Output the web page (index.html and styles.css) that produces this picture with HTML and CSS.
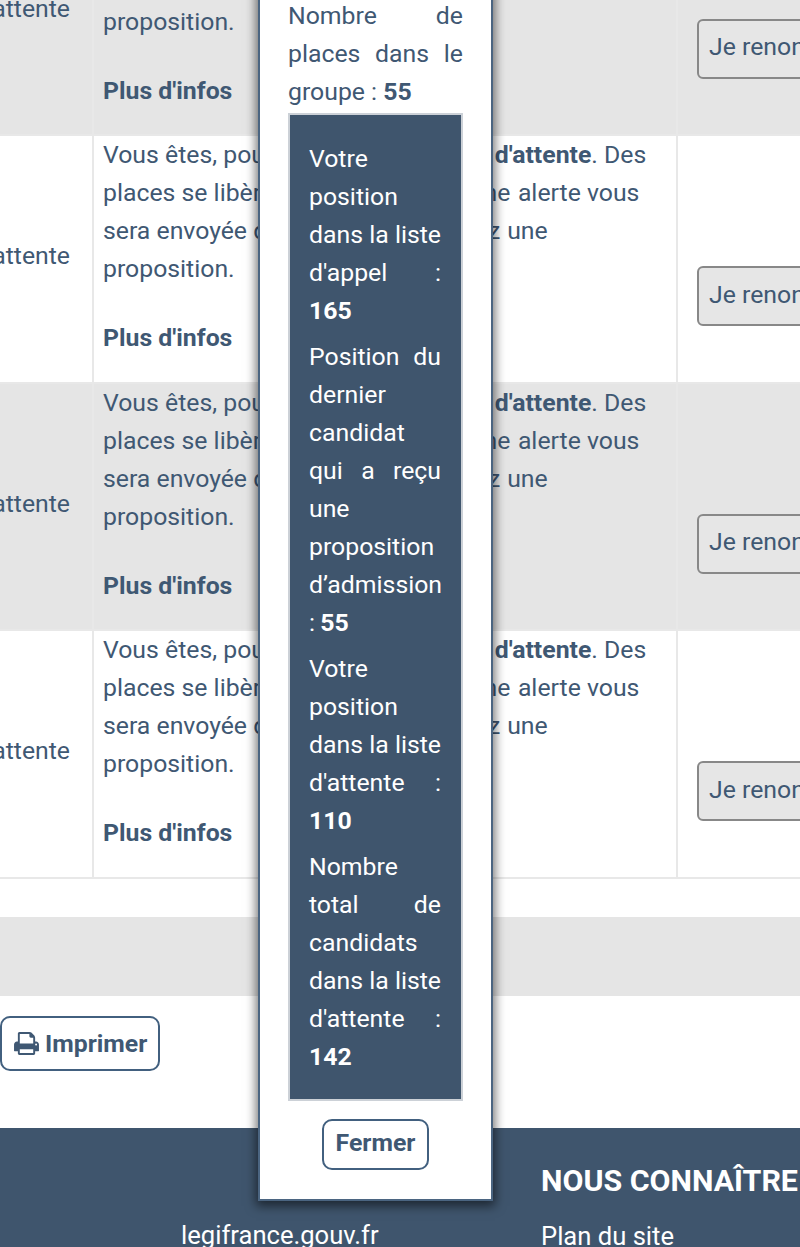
FILE: index.html
```html
<!DOCTYPE html>
<html lang="fr">
<head>
<meta charset="utf-8">
<title>Liste d'attente</title>
<link rel="stylesheet" href="styles.css">
</head>
<body>
<div class="page">
  <main class="scrolled">
    <table class="voeux">
      <tbody>
        <tr class="alt">
          <td class="etat"><span>En attente</span></td>
          <td class="desc"><p>Vous êtes, pour <span class="fit-a">ce vœu, sur la liste </span><b>d'attente</b>. Des<br>places se libèrent <span class="fit-b">au fil de l'eau : une </span>alerte vous<br>sera envoyée <span class="fit-c">dès que vous recevrez </span>une<br>proposition.</p><p class="infos">Plus d'infos</p></td>
          <td class="action"><button class="renoncer">Je renoncer</button></td>
        </tr>
        <tr>
          <td class="etat"><span>En attente</span></td>
          <td class="desc"><p>Vous êtes, pour <span class="fit-a">ce vœu, sur la liste </span><b>d'attente</b>. Des<br>places se libèrent <span class="fit-b">au fil de l'eau : une </span>alerte vous<br>sera envoyée <span class="fit-c">dès que vous recevrez </span>une<br>proposition.</p><p class="infos">Plus d'infos</p></td>
          <td class="action"><button class="renoncer">Je renoncer</button></td>
        </tr>
        <tr class="alt">
          <td class="etat"><span>En attente</span></td>
          <td class="desc"><p>Vous êtes, pour <span class="fit-a">ce vœu, sur la liste </span><b>d'attente</b>. Des<br>places se libèrent <span class="fit-b">au fil de l'eau : une </span>alerte vous<br>sera envoyée <span class="fit-c">dès que vous recevrez </span>une<br>proposition.</p><p class="infos">Plus d'infos</p></td>
          <td class="action"><button class="renoncer">Je renoncer</button></td>
        </tr>
        <tr>
          <td class="etat"><span>En attente</span></td>
          <td class="desc"><p>Vous êtes, pour <span class="fit-a">ce vœu, sur la liste </span><b>d'attente</b>. Des<br>places se libèrent <span class="fit-b">au fil de l'eau : une </span>alerte vous<br>sera envoyée <span class="fit-c">dès que vous recevrez </span>une<br>proposition.</p><p class="infos">Plus d'infos</p></td>
          <td class="action"><button class="renoncer">Je renoncer</button></td>
        </tr>
      </tbody>
    </table>
    <div class="band"></div>
    <div class="print-row">
      <button class="imprimer">
        <svg class="print-icon" viewBox="64 128 1664 1536" aria-hidden="true"><path d="M448 1536h896v-256h-896v256zm0-640h896v-384h-160q-40 0-68-28t-28-68v-160h-640v640zm1152 64q0-26-19-45t-45-19-45 19-19 45 19 45 45 19 45-19 19-45zm128 0v416q0 13-9.5 22.5t-22.5 9.5h-224v160q0 40-28 68t-68 28h-960q-40 0-68-28t-28-68v-160h-224q-13 0-22.5-9.5t-9.5-22.5v-416q0-79 56.5-135.5t135.5-56.5h64v-544q0-40 28-68t68-28h672q40 0 88 20t76 48l152 152q28 28 48 76t20 88v256h64q79 0 135.5 56.5t56.5 135.5z"/></svg>
        Imprimer
      </button>
    </div>
    <footer class="footer">
      <div class="foot-col foot-first">
        <a>legifrance.gouv.fr</a>
      </div>
      <div class="foot-col">
        <h2>NOUS CONNAÎTRE</h2>
        <a>Plan du site</a>
      </div>
    </footer>
  </main>

  <aside class="modal">
    <p class="intro">Nombre de places dans le groupe : <b>55</b></p>
    <div class="ranks">
      <p>Votre position dans la liste d'appel : <b>165</b></p>
      <p>Position du dernier candidat qui a reçu une proposition d’admission : <b>55</b></p>
      <p>Votre position dans la liste d'attente : <b>110</b></p>
      <p>Nombre total de candidats dans la liste d'attente : <b>142</b></p>
    </div>
    <div class="modal-actions"><button class="fermer">Fermer</button></div>
  </aside>
</div>
</body>
</html>
```

FILE: styles.css
```css
html, body {
  margin: 0;
  padding: 0;
  overflow: hidden;
  background: #fff;
}

.page {
  position: relative;
  width: 800px;
  height: 1247px;
  overflow: hidden;
  font-family: Roboto, "Liberation Sans", sans-serif;
  font-size: 24.8px;
  line-height: 38px;
  color: #3f5873;
}

.scrolled {
  margin-top: -111.5px;
}

.voeux {
  border-collapse: separate;
  border-spacing: 0;
  table-layout: fixed;
  width: 1000px;
  margin-left: -100px;
}

.voeux td {
  height: 247.5px;
  padding: 0;
  box-sizing: border-box;
  border-bottom: 2px solid #e8e8e8;
  border-right: 2px solid #e8e8e8;
}

.voeux tr.alt td {
  background: #e5e5e5;
  border-color: #e8e8e8;
}

.etat {
  width: 194px;
  white-space: nowrap;
  vertical-align: middle;
  padding-bottom: 5px !important;
}

.etat span {
  margin-left: -18px;
  display: block;
  padding-left: 0;
  text-align: right;
  padding-right: 22px;
}

.desc {
  width: 584px;
  vertical-align: top;
  padding-left: 9px !important;
}

.desc p {
  margin: 0;
  white-space: nowrap;
}

.fit-a { word-spacing: 1px; }
.fit-b { word-spacing: 1.4px; }
.fit-c { word-spacing: 0.8px; }

.desc .infos {
  margin-top: 31px;
  font-weight: 700;
}

.action {
  vertical-align: middle;
  padding: 75px 0 0 19px !important;
  border-right: 0 !important;
}

.renoncer {
  display: block;
  height: 60px;
  width: 200px;
  padding: 0 10px 3px;
  text-align: left;
  font: inherit;
  color: inherit;
  background: #e6e6e6;
  border: 2px solid #888;
  border-radius: 6px;
  white-space: nowrap;
}

.band {
  height: 79px;
  margin-top: 38.5px;
  background: #e5e5e5;
}

.print-row {
  padding: 20px 0 57px;
}

.imprimer, .fermer {
  font: inherit;
  font-weight: 700;
  color: inherit;
  background: #fff;
  border: 2px solid #42607f;
  border-radius: 10px;
}

.imprimer {
  display: flex;
  align-items: center;
  gap: 6px;
  width: 160px;
  height: 55px;
  padding: 0 0 0 12px;
}

.print-icon {
  width: 25px;
  height: 23px;
  fill: currentColor;
}

.footer {
  display: grid;
  grid-template-columns: 360px 260px;
  padding: 31px 0 0 181px;
  height: 200px;
  box-sizing: border-box;
  background: #3f556d;
  color: #fff;
}

.foot-col {
  display: flex;
  flex-direction: column;
  justify-content: flex-start;
  font-size: 25.6px;
}

.foot-first {
  padding-top: 57px;
}

.foot-col h2 {
  margin: 0 0 14px;
  font-size: 30.4px;
  line-height: 44px;
  font-weight: 700;
  white-space: nowrap;
}

.foot-col a {
  line-height: 38px;
  white-space: nowrap;
}

.modal {
  position: absolute;
  left: 258px;
  bottom: 46px;
  width: 235px;
  box-sizing: border-box;
  padding: 30px 28px 29px;
  background: #fff;
  border: 2px solid #4b6581;
  box-shadow: 0 3px 10px 2px rgba(0, 0, 0, 0.55);
}

.modal p {
  margin: 0;
  text-align: justify;
}

.ranks {
  margin-top: 2px;
  padding: 25px 20px 15px 19px;
  background: #3f556d;
  color: #fff;
  border: 2px solid #ccd1d7;
  word-spacing: -1px;
}

.modal .ranks p {
  margin-bottom: 8px;
}

.modal-actions {
  display: flex;
  justify-content: center;
  margin-top: 18px;
}

.fermer {
  width: 107px;
  height: 51px;
  padding: 0 0 4px;
}
```
